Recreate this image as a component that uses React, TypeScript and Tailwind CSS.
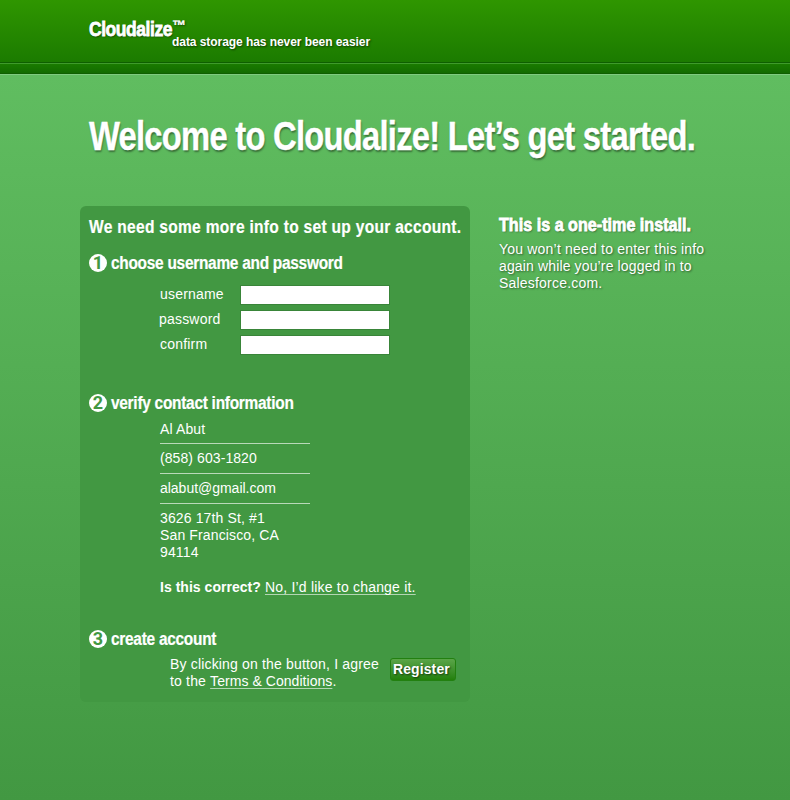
import type { ReactNode } from "react";

function StepHeading({ number, children }: { number: number; children: ReactNode }) {
  return (
    <h3 className="flex h-[18px] items-start text-[18px] leading-[18px] font-bold">
      <span className="flex h-[18px] w-[18px] shrink-0 justify-center rounded-full bg-white font-[Roboto,sans-serif] text-[18px] text-[#429842]">
        {number}
      </span>
      <span className="ml-1 origin-left scale-x-[.856] tracking-[-0.3px] whitespace-nowrap [-webkit-text-stroke:0.2px_white]">
        {children}
      </span>
    </h3>
  );
}

function Field({ label, type, nudge }: { label: string; type: string; nudge?: boolean }) {
  return (
    <label className="flex h-5 items-start">
      <span className={nudge ? "-ml-px w-[81px] leading-[18px]" : "w-20 leading-[18px]"}>{label}</span>
      <input type={type} className="h-5 w-[150px] border border-[#398539] bg-white px-1 text-black outline-none" />
    </label>
  );
}

function TextLink({ children }: { children: ReactNode }) {
  return (
    <a href="#" className="tracking-[0.05px] underline decoration-[#b3d6b3] decoration-1 underline-offset-[2px] [text-decoration-skip-ink:none]">
      {children}
    </a>
  );
}

export default function App() {
  return (
    <div className="flex h-[800px] w-full flex-col overflow-hidden bg-[#429842] font-['Liberation_Sans',Arial,sans-serif] text-[14px] leading-[17px] tracking-[0.2px] text-white">
      <header className="shrink-0">
        <div className="h-[62px] bg-linear-to-b from-[#2f9600] to-[#1b7b00] pt-[19px] pl-[89px] [text-shadow:1px_1px_2px_rgba(0,0,0,.55)]">
          <div className="flex h-[17px] tracking-normal">
            <div className="w-[83px]">
              <div className="origin-left scale-x-[.874] text-[20px] leading-5 font-bold tracking-[-0.5px] whitespace-nowrap [-webkit-text-stroke:0.8px_white]">
                Cloudalize
              </div>
            </div>
            <span className="text-[14px] leading-[12px] font-bold [-webkit-text-stroke:0.3px_white]">™</span>
          </div>
          <p className="ml-[83px] text-[12px] leading-[12px] font-bold tracking-[-0.06px] whitespace-nowrap">
            data storage has never been easier
          </p>
        </div>
        <div className="h-3 border-t border-b border-t-[#0e5f00] border-b-[#0e5f00] bg-[#187600]">
          <div className="h-full border-t border-[#3f9a2c] bg-linear-to-b from-[#1a7b00] to-[#126b00]" />
        </div>
      </header>

      <main className="flex-1 border-t border-[#7fcb7f] bg-linear-to-b from-[#60bd60] to-[#429842] pt-[41px] pl-20">
        <h1 className="ml-[9px] h-10 w-[606px] text-[40px] leading-10 font-bold tracking-[-0.9px] whitespace-nowrap [-webkit-text-stroke:0.4px_white] [text-shadow:1px_2px_2px_rgba(0,0,0,.4)]">
          <span className="inline-block origin-left scale-x-[.818]">Welcome to Cloudalize! Let’s get started.</span>
        </h1>

        <div className="mt-[50px] flex items-start">
          <section className="h-[496px] w-[390px] rounded-[6px] bg-[#429842] pt-[9px] pl-[9px]">
            <h2 className="h-6 text-[19px] leading-6 font-bold tracking-[0.37px] whitespace-nowrap [-webkit-text-stroke:0.2px_white]">
              <span className="inline-block origin-left scale-x-[.817]">We need some more info to set up your account.</span>
            </h2>

            <div className="mt-[15px] tracking-normal">
              <StepHeading number={1}>choose username and password</StepHeading>
            </div>
            <form className="mt-[13px] ml-[71px] flex flex-col gap-[5px]">
              <Field label="username" type="text" />
              <Field label="password" type="password" nudge />
              <Field label="confirm" type="password" />
            </form>

            <div className="mt-[39px] tracking-normal">
              <StepHeading number={2}>verify contact information</StepHeading>
            </div>
            <div className="mt-[9px] ml-[71px] w-[150px] tracking-[0.13px]">
              <p className="border-b border-[#b9d9b9] pb-[5px]">Al Abut</p>
              <p className="border-b border-[#b9d9b9] py-1.5 tracking-[0.08px]">(858) 603-1820</p>
              <p className="border-b border-[#b9d9b9] py-1.5 tracking-[-0.02px]">alabut@gmail.com</p>
              <p className="pt-1.5 whitespace-nowrap">
                3626 17th St, #1
                <br />
                San Francisco, CA
                <br />
                94114
              </p>
            </div>
            <p className="mt-[18px] ml-[71px] whitespace-nowrap">
              <strong className="tracking-[0.03px]">Is this correct?</strong>{" "}
              <span className="tracking-[0.2px]">
                <a href="#" className="underline decoration-[#b3d6b3] decoration-1 underline-offset-[2px] [text-decoration-skip-ink:none]">
                  No, I’d like to change it.
                </a>
              </span>
            </p>

            <div className="mt-[34px] tracking-normal">
              <StepHeading number={3}>create account</StepHeading>
            </div>
            <div className="mt-2 ml-[81px] flex">
              <p className="w-[220px] tracking-[0.17px] whitespace-nowrap">
                By clicking on the button, I agree
                <br />
                to the <TextLink>Terms &amp; Conditions</TextLink>.
              </p>
              <button className="mt-0.5 flex h-[23px] w-[66px] items-center rounded-[3px] border border-[#228010] bg-linear-to-b from-[#5aa548] to-[#228008] pl-0.5 text-[14px] font-bold tracking-[0.1px] [text-shadow:1px_1px_2px_rgba(0,0,0,.6)]">
                Register
              </button>
            </div>
          </section>

          <aside className="mt-2.5 ml-[29px] [text-shadow:1px_1px_2px_rgba(0,0,0,.45)]">
            <h2 className="h-[18px] text-[18px] leading-[18px] font-bold tracking-normal [-webkit-text-stroke:0.8px_white]">
              <span className="inline-block origin-left scale-x-[.897] whitespace-nowrap">This is a one-time install.</span>
            </h2>
            <p className="mt-[7px] whitespace-nowrap">
              You won’t need to enter this info
              <br />
              <span className="tracking-[0.14px]">again while you’re logged in to</span>
              <br />
              Salesforce.com.
            </p>
          </aside>
        </div>
      </main>
    </div>
  );
}
